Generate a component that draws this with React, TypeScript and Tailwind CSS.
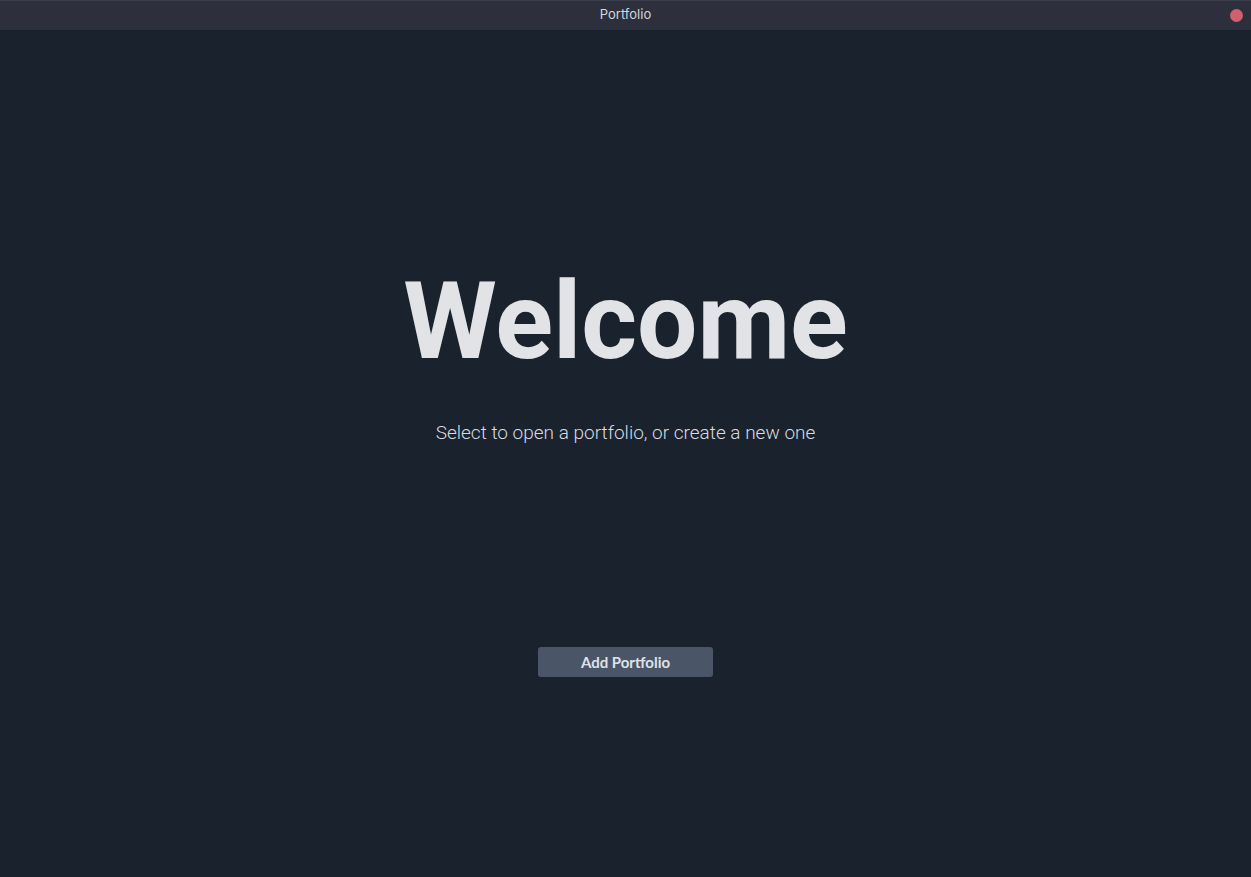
export default function App() {
  return (
    <div className="flex h-[877px] w-full flex-col overflow-hidden bg-[#1a222d]" style={{ fontFamily: 'Roboto, sans-serif' }}>
      {/* Title bar */}
      <div className="relative flex h-[30px] shrink-0 items-center justify-center border-t border-[#3a3d4a] bg-[#2d303c]">
        <span className="-mt-[1px] text-[13px] text-[#d4d6de]" style={{ fontFamily: 'Inter, sans-serif' }}>Portfolio</span>
        <span className="absolute right-[8px] top-[8px] h-[13px] w-[13px] rounded-full bg-[#d0606c]" />
      </div>

      {/* Content */}
      <div className="flex flex-1 flex-col items-center">
        <h1 className="mt-[232px] text-[107px] font-bold leading-[120px] text-[#e2e3e6]">Welcome</h1>
        <p className="mt-[39px] text-[19px] font-light leading-[24px] text-[#d8dbe0]">Select to open a portfolio, or create a new one</p>
        <button className="mt-[202px] h-[30px] w-[175px] rounded-[3px] bg-[#4a5567] text-[15px] font-bold text-[#dfe2e7]" style={{ fontFamily: 'Lato, sans-serif' }}>
          Add Portfolio
        </button>
      </div>
    </div>
  );
}
